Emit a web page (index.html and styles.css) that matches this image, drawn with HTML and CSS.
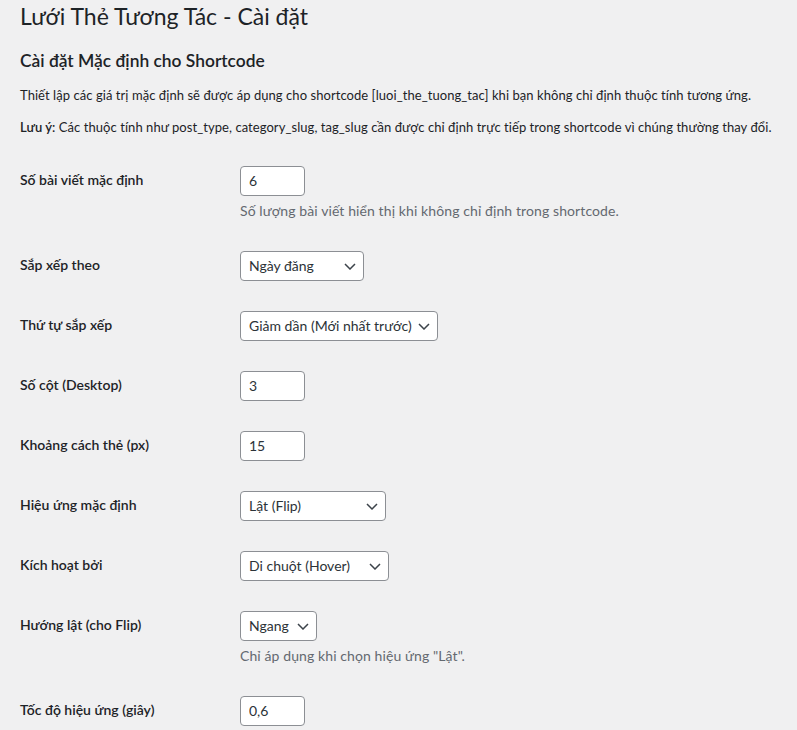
FILE: index.html
```html
<!DOCTYPE html>
<html lang="vi">
<head>
  <meta charset="UTF-8" />
  <meta name="viewport" content="width=device-width, initial-scale=1.0"/>
  <title>Lưới Thẻ Tương Tác - Cài đặt</title>
  <link rel="stylesheet" href="styles.css">
</head>
<body>

  <div class="wrap">
    <h1>Lưới Thẻ Tương Tác - Cài đặt</h1>

    <form>
      <h2>Cài đặt Mặc định cho Shortcode</h2>
      <p>Thiết lập các giá trị mặc định sẽ được áp dụng cho shortcode [luoi_the_tuong_tac] khi bạn không chỉ định thuộc tính tương ứng.</p>
      <p><strong>Lưu ý:</strong> Các thuộc tính như post_type, category_slug, tag_slug cần được chỉ định trực tiếp trong shortcode vì chúng thường thay đổi.</p>

      <table class="form-table">
        <tr>
          <th><label for="posts">Số bài viết mặc định</label></th>
          <td>
            <input type="number" id="posts" class="small-text" value="6" />
            <p class="description">Số lượng bài viết hiển thị khi không chỉ định trong shortcode.</p>
          </td>
        </tr>
        <tr>
          <th><label for="orderby">Sắp xếp theo</label></th>
          <td>
            <div class="select-wrap w-orderby">
              <select id="orderby">
                <option>Ngày đăng</option>
                <option>Tiêu đề</option>
                <option>Ngẫu nhiên</option>
              </select>
              <svg class="chevron" viewBox="0 0 12 7" width="12" height="7"><polyline points="1,1 6,6 11,1" /></svg>
            </div>
          </td>
        </tr>
        <tr>
          <th><label for="order">Thứ tự sắp xếp</label></th>
          <td>
            <div class="select-wrap w-order">
              <select id="order">
                <option>Giảm dần (Mới nhất trước)</option>
                <option>Tăng dần (Cũ nhất trước)</option>
              </select>
              <svg class="chevron" viewBox="0 0 12 7" width="12" height="7"><polyline points="1,1 6,6 11,1" /></svg>
            </div>
          </td>
        </tr>
        <tr>
          <th><label for="columns">Số cột (Desktop)</label></th>
          <td><input type="number" id="columns" class="small-text" value="3" /></td>
        </tr>
        <tr>
          <th><label for="gap">Khoảng cách thẻ (px)</label></th>
          <td><input type="number" id="gap" class="small-text" value="15" /></td>
        </tr>
        <tr>
          <th><label for="effect">Hiệu ứng mặc định</label></th>
          <td>
            <div class="select-wrap w-effect">
              <select id="effect">
                <option>Lật (Flip)</option>
                <option>Trượt (Slide)</option>
                <option>Mờ dần (Fade)</option>
              </select>
              <svg class="chevron" viewBox="0 0 12 7" width="12" height="7"><polyline points="1,1 6,6 11,1" /></svg>
            </div>
          </td>
        </tr>
        <tr>
          <th><label for="trigger">Kích hoạt bởi</label></th>
          <td>
            <div class="select-wrap w-trigger">
              <select id="trigger">
                <option>Di chuột (Hover)</option>
                <option>Nhấp chuột (Click)</option>
              </select>
              <svg class="chevron" viewBox="0 0 12 7" width="12" height="7"><polyline points="1,1 6,6 11,1" /></svg>
            </div>
          </td>
        </tr>
        <tr>
          <th><label for="direction">Hướng lật (cho Flip)</label></th>
          <td>
            <div class="select-wrap w-direction">
              <select id="direction">
                <option>Ngang</option>
                <option>Dọc</option>
              </select>
              <svg class="chevron" viewBox="0 0 12 7" width="12" height="7"><polyline points="1,1 6,6 11,1" /></svg>
            </div>
            <p class="description">Chỉ áp dụng khi chọn hiệu ứng "Lật".</p>
          </td>
        </tr>
        <tr>
          <th><label for="speed">Tốc độ hiệu ứng (giây)</label></th>
          <td><input type="text" id="speed" class="small-text" value="0,6" /></td>
        </tr>
      </table>
    </form>
  </div>

</body>
</html>
```

FILE: styles.css
```css
body {
  margin: 0;
  background: #f0f0f1;
  color: #1d2327;
  font-family: Lato, "Noto Sans", sans-serif;
  font-size: 13px;
  line-height: 1.4;
}

.wrap {
  padding: 0 20px;
}

h1 {
  font-size: 23px;
  font-weight: 400;
  line-height: 1.3;
  margin: 0;
  padding: 2px 0 4px;
}

h2 {
  font-size: 17.4px;
  font-weight: 600;
  line-height: 1.3;
  margin: 14px 0 13px;
}

p {
  font-size: 13px;
  line-height: 1.5;
  letter-spacing: 0.06px;
  margin: 13px 0;
}

strong {
  font-weight: 600;
}

.form-table {
  border-collapse: collapse;
  width: 100%;
  margin-top: 0;
}

.form-table th {
  width: 200px;
  padding: 20px 10px 20px 0;
  text-align: left;
  vertical-align: top;
  font-size: 14px;
  font-weight: 600;
  line-height: 1.3;
  color: #1d2327;
}

.form-table td {
  padding: 15px 10px;
  vertical-align: top;
  font-size: 14px;
  line-height: 1.3;
}

input, select {
  display: block;
  box-sizing: border-box;
  height: 30px;
  margin: 0;
  padding: 0 8px;
  border: 1px solid #8c8f94;
  border-radius: 4px;
  background: #fff;
  color: #2c3338;
  font-family: inherit;
  font-size: 14px;
  line-height: 2;
}

input.small-text {
  width: 65px;
}

input[type=number]::-webkit-inner-spin-button,
input[type=number]::-webkit-outer-spin-button {
  -webkit-appearance: none;
  margin: 0;
}

input[type=number] {
  -moz-appearance: textfield;
}

select {
  width: 100%;
  padding-right: 24px;
  -webkit-appearance: none;
  appearance: none;
}

.select-wrap {
  position: relative;
}

.chevron {
  position: absolute;
  right: 8px;
  top: 12px;
  fill: none;
  stroke: #3c434a;
  stroke-width: 1.5;
  pointer-events: none;
}

.w-orderby { width: 124px; }
.w-order { width: 198px; }
.w-effect { width: 146px; }
.w-trigger { width: 149px; }
.w-direction { width: 77px; }

.form-table td p.description {
  margin: 4px 0 0;
  font-size: 14px;
  line-height: 1.5;
  letter-spacing: 0.1px;
  color: #646970;
}
```
